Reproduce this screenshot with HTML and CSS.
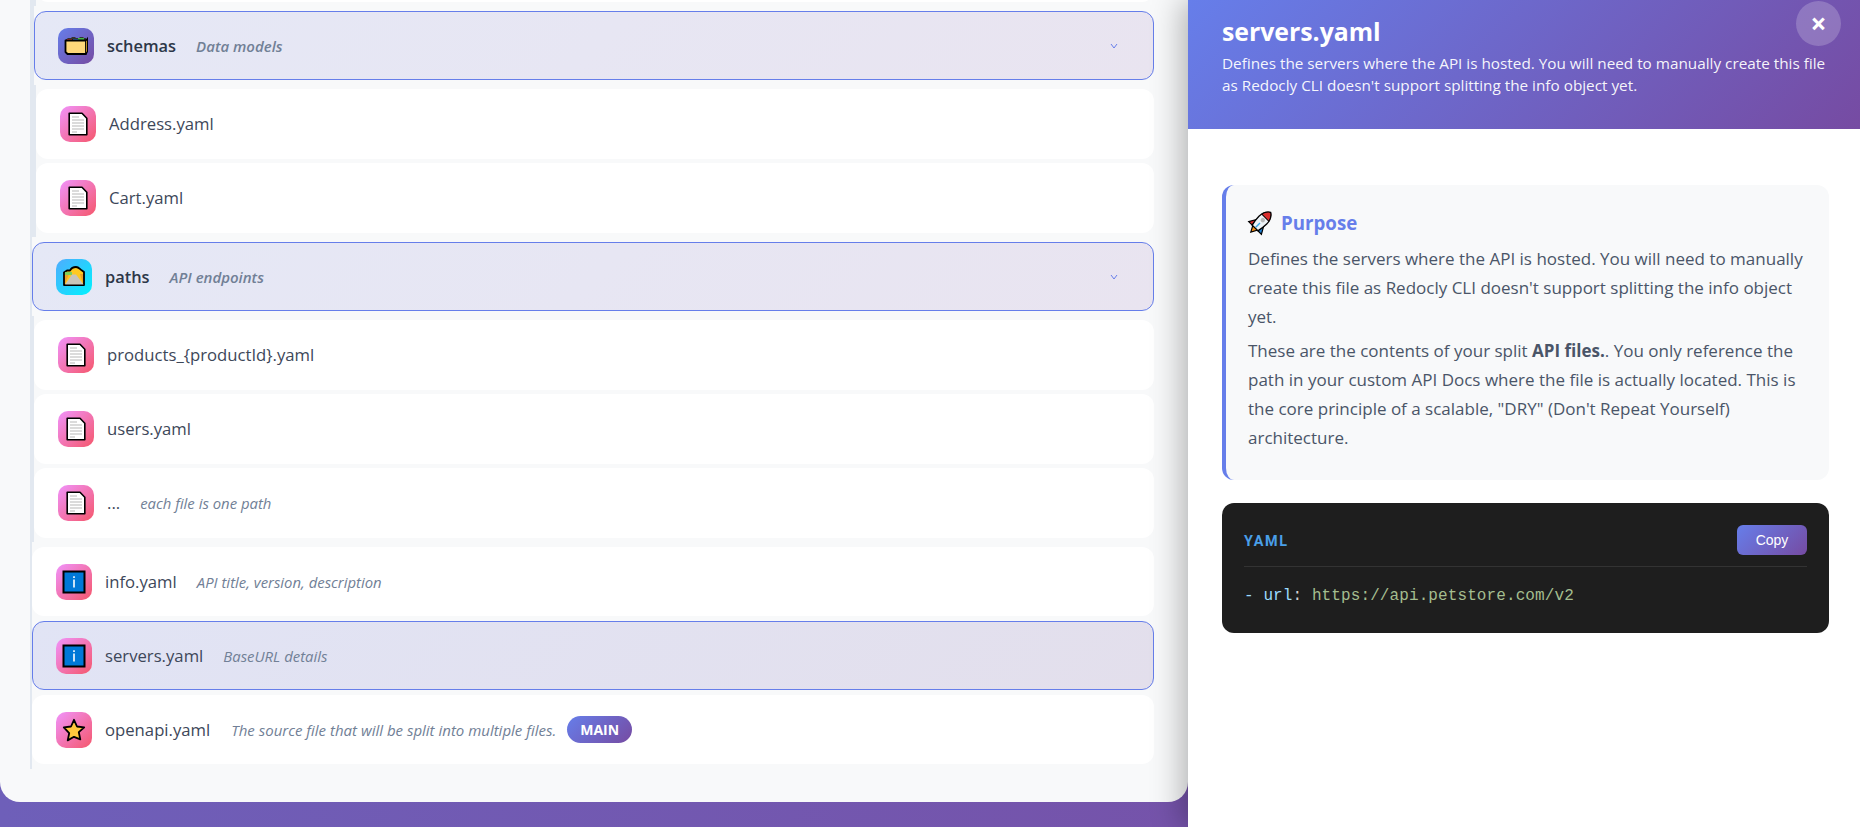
FILE: index.html
```html
<!DOCTYPE html>
<html lang="en">
<head>
<meta charset="utf-8">
<title>servers.yaml</title>
<link rel="stylesheet" href="styles.css">
</head>
<body>
<div class="app">
  <main class="main">
    <div class="card">
      <div class="tree">
        <div class="children">
          <div class="children">
            <div class="children first-children">
              <div class="row file"></div>
            </div>
            <div class="row head">
              <span class="ico ico-purple"><svg class="glyph" viewBox="0 0 24 24"><path d="M2 5.500 4 4h3l1-1h3l1 1h3l1-1h3l1 1h2v3H2z" fill="#333"/><path d="M3 5h5v3H3z" fill="#e03c31"/><path d="M9 5h5v3H9z" fill="#2e86de"/><path d="M14 4h6v3h-6z" fill="#44b548"/><path d="M1.500 6.500h20.500v13.500H3.500l-2-2z" fill="#ffd77a" stroke="#000" stroke-width="1.800" stroke-linejoin="round"/><path d="M22 6.500l1.500-2v12.800L22 20" fill="#e9a92f" stroke="#000" stroke-width="1.400"/></svg></span>
              <span class="name strong">schemas</span><span class="desc strong-desc">Data models</span>
              <svg class="chev" viewBox="0 0 8 6"><path d="M1 1l3 4 3-4" fill="none" stroke="#667eea" stroke-width="1"/></svg>
            </div>
            <div class="children">
              <div class="row file">
                <span class="ico ico-pink"><svg class="doc" viewBox="0 0 20 24"><use href="#doc"/></svg></span>
                <span class="name">Address.yaml</span>
              </div>
              <div class="row file">
                <span class="ico ico-pink"><svg class="doc" viewBox="0 0 20 24"><use href="#doc"/></svg></span>
                <span class="name">Cart.yaml</span>
              </div>
            </div>
          </div>
          <div class="row head after-group">
            <span class="ico ico-blue"><svg class="glyph" viewBox="0 0 24 24"><path d="M2 20V7.500L5 5.500h3c1-2 3-3.500 6-3.500 3 0 3.500 2 6 3.500l2 1.500V20z" fill="#ffc91f" stroke="#000" stroke-width="1.800" stroke-linejoin="round"/><path d="M3 19V9l4 0-4 10z" fill="#eea12a"/><path d="M21 19V9h-3l3 10z" fill="#eea12a"/><path d="M3 19.500 10 9.500h4l7.500 10z" fill="#c9c5b9"/><path d="M3 7h7v3H3z" fill="#7ed05a"/></svg></span>
            <span class="name strong">paths</span><span class="desc strong-desc">API endpoints</span>
            <svg class="chev" viewBox="0 0 8 6"><path d="M1 1l3 4 3-4" fill="none" stroke="#667eea" stroke-width="1"/></svg>
          </div>
          <div class="children">
            <div class="row file">
              <span class="ico ico-pink"><svg class="doc" viewBox="0 0 20 24"><use href="#doc"/></svg></span>
              <span class="name">products_{productId}.yaml</span>
            </div>
            <div class="row file">
              <span class="ico ico-pink"><svg class="doc" viewBox="0 0 20 24"><use href="#doc"/></svg></span>
              <span class="name">users.yaml</span>
            </div>
            <div class="row file">
              <span class="ico ico-pink"><svg class="doc" viewBox="0 0 20 24"><use href="#doc"/></svg></span>
              <span class="name">...</span><span class="desc">each file is one path</span>
            </div>
          </div>
          <div class="row top after-group">
            <span class="ico ico-pink"><svg class="glyph" viewBox="0 0 24 24"><use href="#info"/></svg></span>
            <span class="name">info.yaml</span><span class="desc">API title, version, description</span>
          </div>
          <div class="row top selected">
            <span class="ico ico-pink"><svg class="glyph" viewBox="0 0 24 24"><use href="#info"/></svg></span>
            <span class="name">servers.yaml</span><span class="desc">BaseURL details</span>
          </div>
          <div class="row top">
            <span class="ico ico-pink"><svg class="glyph" viewBox="0 0 24 24"><path d="M12 1.800l3 6.700 7.200.8-5.400 4.900 1.500 7.200L12 18.800l-6.300 3.600 1.500-7.200L1.800 9.300 9 8.500z" fill="#ffc83d" stroke="#000" stroke-width="1.800" stroke-linejoin="round"/></svg></span>
            <span class="name">openapi.yaml</span><span class="desc wide">The source file that will be split into multiple files.</span>
            <span class="badge">MAIN</span>
          </div>
        </div>
      </div>
    </div>
  </main>
  <aside class="panel">
    <header class="panel-head">
      <h1 class="panel-title">servers.yaml</h1>
      <p class="panel-sub">Defines the servers where the API is hosted. You will need to manually create this file<br>as Redocly CLI doesn't support splitting the info object yet.</p>
      <button class="close" type="button">×</button>
    </header>
    <div class="panel-body">
      <section class="purpose">
        <h2 class="purpose-title">
          <svg class="rocket" viewBox="0 0 24 24"><g transform="rotate(45 12 12)"><path d="M8.500 18.500 12 25l3.500-6.500z" fill="#f7941d" stroke="#000" stroke-width="1.200"/><path d="M7 12 3 19l5 0z" fill="#d92d2d" stroke="#000" stroke-width="1.200"/><path d="M17 12l4 7-5 0z" fill="#1f7fd1" stroke="#000" stroke-width="1.200"/><path d="M12 -3c4 2.500 5.500 6.500 5.500 11 0 4-.8 8-1.500 11H8C7.300 16 6.500 12 6.500 8 6.500 3.500 8-.5 12-3z" fill="#eef3f7" stroke="#000" stroke-width="1.300"/><path d="M12 -3c2.800 1.800 4.400 4.400 5 7.500H7C7.600 1.400 9.200-1.200 12-3z" fill="#d92d2d" stroke="#000" stroke-width="1"/><circle cx="12" cy="8" r="2.200" fill="#b9b9b9"/><path d="M12 12v6" stroke="#3ba7e5" stroke-width="1.500"/></g></svg>
          Purpose
        </h2>
        <p class="purpose-text">Defines the servers where the API is hosted. You will need to manually<br>create this file as Redocly CLI doesn't support splitting the info object<br>yet.</p>
        <p class="purpose-text">These are the contents of your split <b>API files.</b>. You only reference the<br>path in your custom API Docs where the file is actually located. This is<br>the core principle of a scalable, "DRY" (Don't Repeat Yourself)<br>architecture.</p>
      </section>
      <section class="code">
        <div class="code-head">
          <span class="lang">YAML</span>
          <button class="copy" type="button">Copy</button>
        </div>
        <pre class="code-text"><span class="k">- url</span><span class="p">:</span> <span class="s">https://api.petstore.com/v2</span></pre>
      </section>
    </div>
  </aside>
</div>
<svg class="defs" aria-hidden="true">
  <symbol id="doc" viewBox="0 0 20 24">
    <path d="M1.200 1.200H14l4.800 5V22.800H1.200z" fill="#fff" stroke="#000" stroke-width="1.600" stroke-linejoin="round"/>
    <path d="M4 5h7M4 8h12M4 11h12M4 14h12M4 17h12M4 20h5" stroke="#d0d0d0" stroke-width="1.500"/>
  </symbol>
  <symbol id="info" viewBox="0 0 24 24">
    <rect x="1.500" y="1.500" width="21" height="21" fill="#0078d7" stroke="#000" stroke-width="2"/>
    <path d="M12 9.500v8" stroke="#fff" stroke-width="1.600"/><path d="M12 6.200v1.800" stroke="#fff" stroke-width="1.600"/>
  </symbol>
</svg>
</body>
</html>
```
FILE: styles.css
```css
* { box-sizing: border-box; }
html, body { margin: 0; height: 100%; overflow: hidden; }
body {
  font-family: "Open Sans", "Noto Sans", sans-serif;
  background: #fff;
  color: #2d3748;
}
.defs { width: 0; height: 0; display: block; overflow: hidden; }
.app { display: flex; height: 827px; overflow: hidden; }
.main {
  width: 1188px;
  flex: none;
  height: 827px;
  background: linear-gradient(90deg, #6e5fb9, #7553aa);
}
.card {
  height: 802px;
  background: #f8f9fa;
  border-radius: 0 0 20px 20px;
  overflow: hidden;
  padding: 0 34px 0 30px;
}
.tree { margin-top: -72px; }
.children { border-left: 2px solid #e2e8f0; display: flow-root; }
.first-children { padding-top: 4px; }
.row {
  display: flex;
  align-items: center;
  background: #fff;
  border-radius: 12px;
  border: 1px solid transparent;
  padding: 0 24px 0 23px;
}
.file { height: 70px; margin-bottom: 4px; }
.top { height: 69px; margin-bottom: 5px; }
.head {
  height: 69px;
  margin-bottom: 5px;
  background: linear-gradient(135deg, #e5e8f6, #e9e4f0);
  border-color: #667eea;
}
.children > .head + .children { padding-top: 4px; }
.first-children + .head { margin-top: 5px; }
.after-group { margin-top: 5px; }
.selected {
  background: linear-gradient(135deg, #e1e4f5, #e3dfec);
  border-color: #667eea;
}
.ico {
  width: 36px;
  height: 36px;
  flex: none;
  border-radius: 10px;
  display: flex;
  align-items: center;
  justify-content: center;
  margin-right: 13px;
}
.ico-purple { background: linear-gradient(135deg, #667eea, #764ba2); }
.ico-pink { background: linear-gradient(135deg, #f093fb, #f5576c); }
.ico-blue { background: linear-gradient(135deg, #4facfe, #00f2fe); }
.glyph { width: 24px; height: 24px; display: block; }
.doc { width: 20px; height: 24px; display: block; }
.name { font-size: 16.7px; line-height: 24px; color: #3d4759; white-space: nowrap; }
.strong { font-weight: 600; font-size: 16.4px; color: #2d3748; }
.desc {
  font-size: 14.9px;
  font-style: italic;
  color: #718096;
  margin-left: 20px;
  white-space: nowrap;
}
.wide { font-size: 15px; margin-left: 21px; }
.strong-desc { font-weight: 600; font-size: 15px; }
.chev { width: 8px; height: 6px; margin-left: auto; margin-right: 11px; }
.badge {
  margin-left: 11px;
  height: 27px;
  width: 65px;
  border-radius: 14px;
  background: linear-gradient(135deg, #667eea, #764ba2);
  color: #fff;
  font-size: 14px;
  font-weight: 700;
  display: flex;
  align-items: center;
  justify-content: center;
}
.panel {
  width: 672px;
  flex: none;
  height: 827px;
  background: #fff;
  position: relative;
  z-index: 2;
  box-shadow: -5px 0 30px rgba(0, 0, 0, 0.3);
}
.panel-head {
  height: 129px;
  padding: 12px 34px 0;
  background: linear-gradient(135deg, #667eea, #764ba2);
  color: #fff;
  position: relative;
}
.panel-title { margin: 0; font-size: 24.8px; line-height: 38px; font-weight: 700; }
.panel-sub { margin: 2px 0 0; font-size: 15.3px; line-height: 22px; color: rgba(255,255,255,.95); white-space: nowrap; }
.close {
  position: absolute;
  top: 1px;
  right: 19px;
  width: 45px;
  height: 45px;
  border-radius: 50%;
  border: 0;
  padding: 0;
  background: rgba(255, 255, 255, 0.2);
  color: #fff;
  font: 700 28px/45px "Open Sans", sans-serif;
}
.panel-body { padding: 56px 31px 0 34px; }
.purpose {
  background: #f8f9fa;
  border-left: 4px solid #667eea;
  border-radius: 12px;
  height: 295px;
  padding: 24px 20px 0 22px;
}
.purpose-title {
  margin: 0 0 9px;
  font-size: 18.7px;
  line-height: 27px;
  font-weight: 700;
  color: #667eea;
  display: flex;
  align-items: center;
  gap: 9px;
}
.rocket { width: 24px; height: 24px; flex: none; overflow: visible; }
.purpose-text {
  margin: 0 0 6px;
  font-size: 17px;
  line-height: 28.8px;
  color: #4a5568;
  white-space: nowrap;
}
.code {
  margin-top: 23px;
  height: 130px;
  background: #1e1e1e;
  border-radius: 12px;
  padding: 22px;
}
.code-head {
  display: flex;
  justify-content: space-between;
  align-items: center;
  height: 42px;
  padding-bottom: 11px;
  border-bottom: 1px solid #333;
}
.lang {
  font: 700 14.4px/20px "Roboto", sans-serif;
  letter-spacing: 1.7px;
  color: #4a9fe8;
  padding-top: 3px;
}
.copy {
  width: 70px;
  height: 30px;
  border: 0;
  border-radius: 6px;
  background: linear-gradient(135deg, #667eea, #764ba2);
  color: #fff;
  font: 500 14px/30px "Liberation Sans", sans-serif;
  padding: 0;
}
.code-text {
  margin: 19px 0 0;
  font: 16px/20px "Liberation Mono", monospace;
  letter-spacing: 0.1px;
  color: #d4d4d4;
}
.k { color: #9cdcfe; }
.s { color: #a4bd8f; }
.p { color: #d4d4d4; }
```
